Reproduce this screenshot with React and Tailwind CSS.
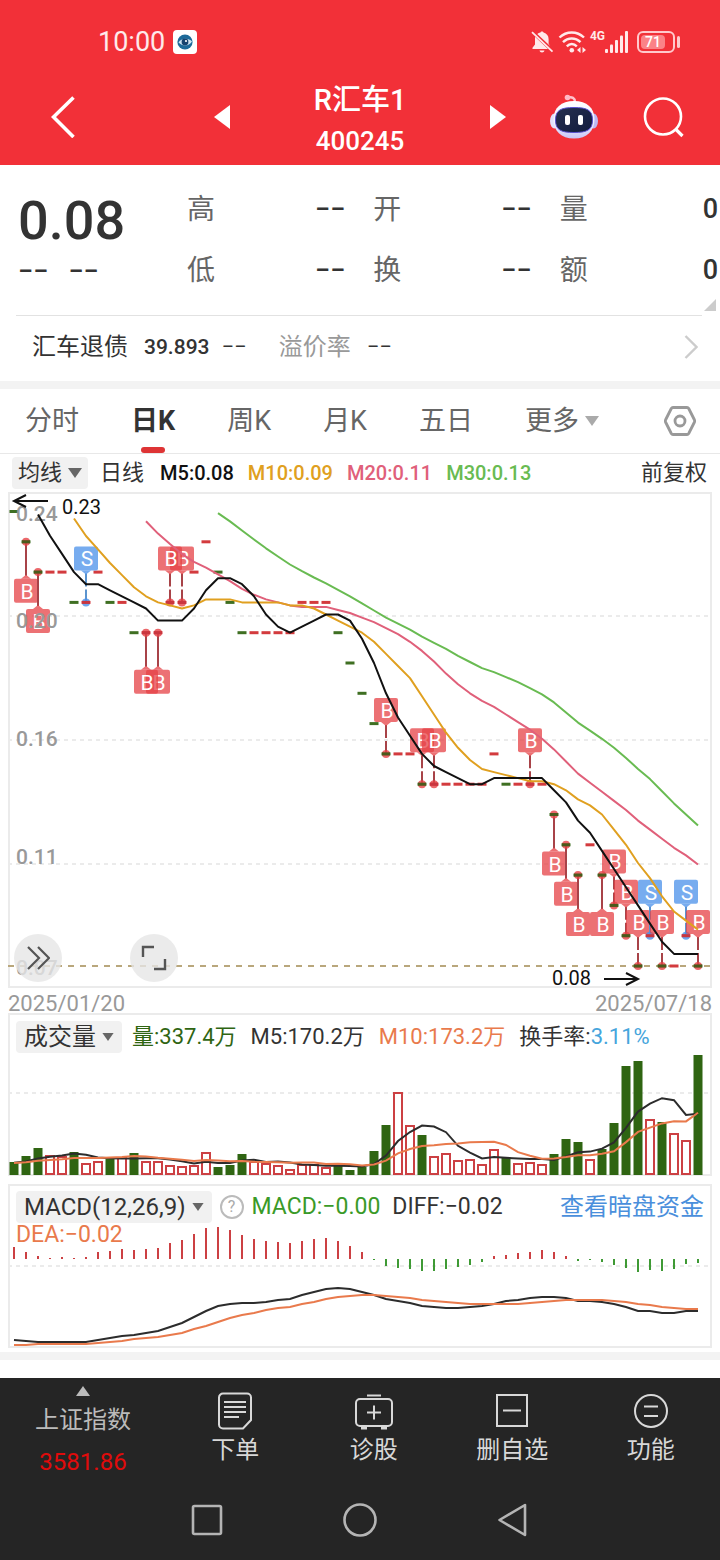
import React from 'react';

// Closing prices in cents, one per trading day
const CLOSES = [
  23, 22, 21, 21, 21, 20, 20, 21, 20, 20, 19, 19, 19, 20, 20, 21, 22, 21, 20, 19, 19, 19, 19, 19, 20,
  20, 20, 19, 18, 17, 16, 15, 15, 15, 14, 14, 14, 14, 14, 14, 15, 14, 14, 14, 14, 13, 12, 11, 12, 11,
  10, 9, 8, 9, 8, 8, 9, 8,
];
// Days before the visible range, needed by the moving averages
const CLOSES_BEFORE = [28.2, 28, 27.9, 27.7, 27.2, 26.9, 26.6, 26.2, 25.8, 25.4, 24.5, 24];

const FALLING_DAYS = [
  0, 1, 2, 5, 8, 10, 17, 18, 19, 27, 28, 29, 30, 31, 34, 41, 45, 46, 47, 49, 50, 51, 52, 54, 57,
];

const TRADES = [
  { day: 1, type: 'B', below: true },
  { day: 2, type: 'B', below: true },
  { day: 6, type: 'S' },
  { day: 12, type: 'B', below: true },
  { day: 11, type: 'B', below: true },
  { day: 14, type: 'B' },
  { day: 13, type: 'B' },
  { day: 31, type: 'B' },
  { day: 34, type: 'B' },
  { day: 35, type: 'B' },
  { day: 43, type: 'B' },
  { day: 45, type: 'B', below: true },
  { day: 46, type: 'B', below: true },
  { day: 47, type: 'B', below: true },
  { day: 49, type: 'B', below: true },
  { day: 50, type: 'B' },
  { day: 51, type: 'B' },
  { day: 52, type: 'B' },
  { day: 53, type: 'S' },
  { day: 54, type: 'B' },
  { day: 56, type: 'S' },
  { day: 57, type: 'B' },
];

const VOLUMES = [
  13, 19, 27, 20, 19, 23, 12, 14, 16, 18, 22, 14, 14, 10, 9, 10, 23, 8, 10, 21, 14, 12, 10, 6, 11, 11,
  8, 10, 5, 8, 24, 50, 83, 50, 40, 19, 22, 15, 16, 11, 26, 18, 12, 13, 11, 21, 36, 33, 16, 26, 52,
  109, 114, 56, 53, 42, 35, 120,
];
const VOLUMES_BEFORE = [12, 12, 12, 12, 12, 12, 12, 12, 12];

const MACD_BARS = [
  12, 7, 3, 1, 2, 1, 2, 7, 8, 10, 9, 10, 11, 16, 19, 25, 31, 32, 29, 24, 20, 18, 17, 16, 18, 20, 21,
  18, 13, 7, -1, -7, -9, -10, -12, -12, -10, -8, -6, -3, 3, 4, 6, 7, 9, 7, 3, -2, -1, -3, -6, -9, -13,
  -11, -12, -10, -5, -4,
];
const DIFF = [
  156, 157, 158, 158, 158, 158, 158, 156, 154, 152, 151, 149, 147, 143, 139, 133, 127, 122, 120, 119,
  119, 118, 116, 115, 111, 108, 105, 104, 105, 108, 111, 115, 117, 119, 122, 123, 124, 124, 123, 122,
  120, 117, 116, 114, 113, 113, 114, 117, 117, 118, 120, 123, 127, 127, 129, 129, 127, 127,
];
const DEA = [
  161, 161, 160, 160, 160, 160, 160, 159, 158, 157, 155, 154, 153, 151, 149, 145, 142, 138, 134, 131,
  129, 126, 124, 123, 120, 118, 115, 113, 112, 111, 111, 112, 113, 114, 116, 117, 118, 119, 120, 120,
  120, 120, 120, 119, 118, 117, 116, 116, 116, 116, 117, 118, 120, 121, 123, 124, 125, 125,
];

const dayX = (day) => 6 + day * 12;
const priceY = (cents) => 474 - (cents - 8) * 30.3;

// Polyline points of an n-day moving average, starting where enough days are known
const averagePoints = (before, values, n, toY) => {
  const all = [...before, ...values];
  const points = [];
  values.forEach((_, day) => {
    const end = before.length + day + 1;
    if (end < n) return;
    const sum = all.slice(end - n, end).reduce((a, b) => a + b, 0);
    points.push(`${dayX(day)},${toY(sum / n).toFixed(1)}`);
  });
  return points.join(' ');
};

const linePoints = (values) => values.map((v, day) => `${dayX(day)},${v}`).join(' ');

function Caret({ className }) {
  return (
    <svg viewBox="0 0 14 10" className={className} fill="currentColor" aria-hidden="true">
      <path d="M0 0h14L7 10z" />
    </svg>
  );
}

function StatusBar() {
  return (
    <div className="flex items-center justify-between pl-[98px] pr-10 pt-6 text-white">
      <div className="flex h-9 items-center gap-2">
        <span className="text-[27px] leading-9 text-white/90">10:00</span>
        <svg viewBox="0 0 24 24" className="h-6 w-6" aria-hidden="true">
          <rect width="24" height="24" rx="4" fill="#fff" />
          <circle cx="12" cy="12" r="7.6" fill="#1d6a99" />
          <path d="M5.500 12.500C8 8 15.500 7.500 19 11.500c-3 4.500-9 5.500-13.500 1z" fill="#cfe4f2" />
          <circle cx="12" cy="12" r="3.400" fill="#17446f" />
          <circle cx="13" cy="11" r="1.100" fill="#fff" />
        </svg>
      </div>
      <div className="flex h-9 items-center">
        {/* Muted bell */}
        <svg viewBox="0 0 24 24" className="h-6 w-6" fill="#ffe9ea" aria-hidden="true">
          <path d="M12 1.500c.8 0 1.400.4 1.600 1.100 3.200.8 5 3.300 5 6.700v4.500l1.500 2.300L7.300 3.900c.9-.6 2-1.100 3.100-1.300.2-.7.800-1.100 1.600-1.100z" />
          <path d="M5 6.700 18 19H2.500v-1.200L5 14.500z" />
          <path d="M9.500 20.500h5c-.3 1.300-1.200 2-2.500 2s-2.200-.7-2.500-2z" />
          <path d="M2 2.200l20.500 19.500" stroke="#ffe9ea" strokeWidth="1.800" />
        </svg>
        {/* Wifi */}
        <svg viewBox="0 0 30 24" className="ml-1 h-6 w-[30px]" fill="none" stroke="#ffe9ea" strokeWidth="2.400" aria-hidden="true">
          <path d="M1.500 7.500C8.500.800 19 .800 26 7.500" />
          <path d="M5 12.200c5-5 12.500-5 17.500 0" />
          <path d="M8.800 16.300c3-3 7-3 10 0" />
          <circle cx="13.800" cy="20.300" r="2.300" fill="#ffe9ea" stroke="none" />
          <path d="M19 20l3.500-3v6zM28 20l-3.500-3v6z" fill="#ffe9ea" stroke="none" />
        </svg>
        <span className="ml-0.5 self-start pt-1 text-xs font-bold leading-4 text-[#ffe9ea]">4G</span>
        <svg viewBox="0 0 24 24" className="h-6 w-6" fill="#ffe9ea" aria-hidden="true">
          <rect x="0" y="19" width="3" height="4" rx="1" />
          <rect x="5" y="14.500" width="3" height="8.500" rx="1" />
          <rect x="10" y="10" width="3" height="13" rx="1" />
          <rect x="15" y="5.500" width="3" height="17.500" rx="1" />
          <rect x="20" y="1" width="3" height="22" rx="1" />
        </svg>
        <div className="ml-2 flex h-[22px] w-[38px] items-center rounded-md border-2 border-[#ffc9cc] p-0.5">
          <span className="flex h-full w-6 items-center justify-center rounded-sm bg-[#fb8287] text-sm font-medium text-white">
            71
          </span>
        </div>
        <span className="ml-0.5 h-3 w-[3px] rounded-sm bg-[#ffc9cc]" />
      </div>
    </div>
  );
}

function RobotIcon() {
  return (
    <svg viewBox="0 0 48 46" className="h-[46px] w-12" aria-hidden="true">
      <defs>
        <linearGradient id="shell" x1="0" y1="0" x2="0" y2="1">
          <stop offset="0" stopColor="#ffffff" />
          <stop offset="0.600" stopColor="#eef0ff" />
          <stop offset="1" stopColor="#c9c4f7" />
        </linearGradient>
        <linearGradient id="visor" x1="0" y1="0" x2="1" y2="1">
          <stop offset="0" stopColor="#26304f" />
          <stop offset="1" stopColor="#111b3d" />
        </linearGradient>
      </defs>
      <path d="M18 3.500c4-1 7 .5 7 4.500" fill="none" stroke="#ffc3cd" strokeWidth="2.400" />
      <circle cx="17.500" cy="3.500" r="2.800" fill="#ffb9c6" />
      <ellipse cx="4.500" cy="27" rx="4.500" ry="7.500" fill="#dfe0fb" />
      <ellipse cx="43.500" cy="27" rx="4.500" ry="7.500" fill="#bdb9f3" />
      <path d="M24 7c13 0 20.500 7 20.500 18.500S37 44.500 24 44.500 3.500 37 3.500 25.500 11 7 24 7z" fill="url(#shell)" />
      <path
        d="M24 13.500c13 0 18.500 2.500 18.500 12.500S37 38.500 24 38.500 5.500 36 5.500 26 11 13.500 24 13.500z"
        fill="url(#visor)"
        stroke="#5a4fd0"
        strokeWidth="1"
      />
      <rect x="15" y="21" width="5" height="10" rx="2" fill="#fff" />
      <rect x="28" y="21" width="5" height="10" rx="2" fill="#fff" />
    </svg>
  );
}

function Header() {
  return (
    <header className="bg-[#f23038] pb-1 text-white">
      <StatusBar />
      <div className="mt-[13px] grid grid-cols-[1fr_auto_1fr] items-center pl-[51px] pr-[35px]">
        <button type="button" aria-label="返回" className="justify-self-start">
          <svg viewBox="0 0 24 42" className="h-[42px] w-6" fill="none" stroke="currentColor" strokeWidth="3.600" aria-hidden="true">
            <path d="M22.500 1.500 2.500 21l20 20" />
          </svg>
        </button>
        <div className="-ml-4 flex items-center gap-[77px]">
          <button type="button" aria-label="上一只">
            <svg viewBox="0 0 16 24" className="h-6 w-4" fill="currentColor" aria-hidden="true">
              <path d="M16 0v24L0 12z" />
            </svg>
          </button>
          <h1 className="flex w-[106px] flex-col items-center pt-1.5 font-medium">
            <span className="text-[29px] leading-[42px]">R汇车1</span>
            <span className="text-[26px] leading-10">400245</span>
          </h1>
          <button type="button" aria-label="下一只">
            <svg viewBox="0 0 16 24" className="h-6 w-4" fill="currentColor" aria-hidden="true">
              <path d="M0 0v24l16-12z" />
            </svg>
          </button>
        </div>
        <div className="flex items-center gap-[45px] justify-self-end">
          <button type="button" aria-label="智能助手">
            <RobotIcon />
          </button>
          <button type="button" aria-label="搜索">
            <svg viewBox="0 0 42 42" className="h-[42px] w-[42px]" fill="none" stroke="currentColor" strokeWidth="2.600" aria-hidden="true">
              <circle cx="20" cy="20.500" r="18" />
              <path d="M32.500 33l7 7" strokeWidth="3.200" />
            </svg>
          </button>
        </div>
      </div>
    </header>
  );
}

const QUOTE_FIELDS = [
  ['高', '−−'],
  ['开', '−−'],
  ['量', '0'],
  ['低', '−−'],
  ['换', '−−'],
  ['额', '0'],
];

function Quote() {
  return (
    <section className="bg-white">
      <div className="flex pt-[14px]">
        <div className="w-[187px] shrink-0 pl-[18px] text-[#333]">
          <div className="text-[54px] font-medium leading-[84px]">0.08</div>
          <div className="flex gap-5 text-[27px] font-medium leading-4">
            <span>−−</span>
            <span>−−</span>
          </div>
        </div>
        <dl className="grid flex-1 grid-cols-3 gap-x-7 pr-0.5">
          {QUOTE_FIELDS.map(([label, value]) => (
            <div key={label} className="flex h-[61px] items-center justify-between">
              <dt className="text-[28px] text-[#666]">{label}</dt>
              <dd className="text-[27px] font-medium text-[#333]">{value}</dd>
            </div>
          ))}
        </dl>
      </div>
      <div className="flex h-[10px] items-end justify-end pr-1 text-[#ccc]">
        <svg viewBox="0 0 12 12" className="h-3 w-3" fill="currentColor" aria-hidden="true">
          <path d="M12 0v12H0z" />
        </svg>
      </div>
      <a href="#bond" className="ml-4 mr-[18px] mt-1 flex h-[66px] items-center border-t border-[#e2e2e2] pb-1 pl-4 text-2xl text-[#333]">
        <span>汇车退债</span>
        <span className="ml-4 text-[21px] font-medium">39.893</span>
        <span className="ml-3 text-[22px]">−−</span>
        <span className="ml-8 text-[#999]">溢价率</span>
        <span className="ml-4 text-[22px]">−−</span>
        <svg viewBox="0 0 14 24" className="ml-auto mr-1 h-6 w-[14px]" fill="none" stroke="#ccc" strokeWidth="2.400" aria-hidden="true">
          <path d="M1.500 1l11 11-11 11" />
        </svg>
      </a>
    </section>
  );
}

const TABS = ['分时', '日K', '周K', '月K', '五日'];

function PeriodTabs() {
  return (
    <nav className="flex h-[65px] items-stretch gap-[52px] border-b border-[#e8e8e8] pl-[25px] pr-6 text-[27px] text-[#666]">
      {TABS.map((tab) =>
        tab === '日K' ? (
          <button key={tab} type="button" className="relative font-bold text-[#333]">
            {tab}
            <span className="absolute bottom-0 left-1/2 h-1.5 w-6 -translate-x-1/2 rounded-sm bg-[#de3435]" />
          </button>
        ) : (
          <button key={tab} type="button">
            {tab}
          </button>
        ),
      )}
      <button type="button" className="flex items-center gap-1.5">
        更多
        <Caret className="h-3 w-[14px] text-[#aaa]" />
      </button>
      <button type="button" aria-label="设置" className="ml-auto shrink-0">
        <svg viewBox="0 0 32 32" className="h-8 w-8" fill="none" stroke="#999" strokeWidth="2.800" strokeLinejoin="round" aria-hidden="true">
          <path d="M9 2.500h14a2 2 0 0 1 1.700 1L30.500 15a2 2 0 0 1 0 2l-5.800 11.500a2 2 0 0 1-1.700 1H9a2 2 0 0 1-1.700-1L1.500 17a2 2 0 0 1 0-2L7.300 3.500a2 2 0 0 1 1.700-1z" />
          <circle cx="16" cy="16" r="5" />
        </svg>
      </button>
    </nav>
  );
}

function TradeTag({ day, type, below }) {
  const x = dayX(day);
  const y = priceY(CLOSES[day]);
  const center = below ? y + 49 : y - 44;
  const fill = type === 'B' ? '#e64246' : '#4a90ea';
  const stem = type === 'B' ? '#a84348' : '#5b94cf';
  const side = below ? -1 : 1;
  return (
    <g>
      <line
        x1={x}
        x2={x}
        y1={y}
        y2={center + side * 15}
        stroke={stem}
        strokeWidth="2"
        strokeDasharray={below ? undefined : '13 3 20'}
      />
      <circle cx={x} cy={y} r="4" fill={fill} fillOpacity="0.800" />
      <path
        d={`M${x - 5} ${center + side * 12}h10l-5 ${side * 4}z`}
        fill={fill}
        fillOpacity="0.750"
      />
      <rect x={x - 12} y={center - 12} width="24" height="24" rx="2" fill={fill} fillOpacity="0.750" />
      <text x={x + 1} y={center + 8} fontSize="21" textAnchor="middle" fill="#fff">
        {type}
      </text>
    </g>
  );
}

function PriceChart() {
  return (
    <svg viewBox="0 0 704 496" className="block h-auto w-full overflow-visible" fill="none" role="img" aria-label="日K线">
      <rect x="1" y="1" width="702" height="494" stroke="#ebebeb" strokeWidth="2" />
      {[124, 248, 372].map((y) => (
        <line key={y} x1="0" x2="704" y1={y} y2={y} stroke="#ebebeb" strokeWidth="2" strokeDasharray="4 4" />
      ))}
      <line x1="0" x2="704" y1="474" y2="474" stroke="#b9a77c" strokeWidth="2" strokeDasharray="6 6" />

      {CLOSES.map((close, day) => (
        <rect
          key={day}
          x={dayX(day) - 4.5}
          y={priceY(close) - 1.5}
          width="9"
          height="3"
          fill={FALLING_DAYS.includes(day) ? '#3f6f22' : '#d33b3e'}
        />
      ))}
      {TRADES.map((trade) => (
        <TradeTag key={trade.day} {...trade} />
      ))}
      {TRADES.map(({ day }) => (
        <rect
          key={day}
          x={dayX(day) - 4}
          y={priceY(CLOSES[day]) - 1.5}
          width="8"
          height="3"
          fill={FALLING_DAYS.includes(day) ? '#4a5a1c' : '#c9363f'}
        />
      ))}

      <g fontSize="21" fontWeight="500" fill="#999">
        <text x="8" y="29">0.24</text>
        <text x="8" y="136">0.20</text>
        <text x="8" y="254">0.16</text>
        <text x="8" y="372">0.11</text>
        <text x="8" y="483">0.07</text>
      </g>

      <g strokeWidth="2" strokeLinejoin="round">
        <polyline points={averagePoints(CLOSES_BEFORE, CLOSES, 30, priceY)} stroke="#69bb52" />
        <polyline points={averagePoints(CLOSES_BEFORE.slice(4), CLOSES, 20, priceY)} stroke="#e0607a" />
        <polyline points={averagePoints(CLOSES_BEFORE.slice(8), CLOSES, 10, priceY)} stroke="#e0a020" />
        <polyline points={averagePoints(CLOSES_BEFORE.slice(10), CLOSES, 5, priceY)} stroke="#111" />
      </g>

      <g fontSize="20" fill="#111" stroke="none">
        <text x="54" y="22">0.23</text>
        <text x="544" y="493">0.08</text>
      </g>
      <g stroke="#111" strokeWidth="2">
        <path d="M40 9H6M18 3L6 9l12 6" />
        <path d="M596 487h34M618 481l12 6-12 6" />
      </g>
    </svg>
  );
}

function PriceSection() {
  return (
    <section>
      <div className="flex h-[38px] items-center pl-3 pr-[13px] text-xl font-medium">
        <button type="button" className="flex h-8 items-center gap-1.5 rounded bg-[#f1f1f1] px-1.5 text-[22px] font-normal text-[#333]">
          均线
          <Caret className="h-2.5 w-[14px] text-[#666]" />
        </button>
        <span className="ml-3 text-[22px] font-normal text-[#333]">日线</span>
        <div className="flex gap-[14px] pl-4">
          <span className="text-[#111]">M5:0.08</span>
          <span className="text-[#e0a020]">M10:0.09</span>
          <span className="text-[#e0607a]">M20:0.11</span>
          <span className="text-[#69bb52]">M30:0.13</span>
        </div>
        <button type="button" className="ml-auto text-[22px] font-normal text-[#333]">
          前复权
        </button>
      </div>
      <div className="relative mx-2">
        <PriceChart />
        <div className="absolute bottom-1.5 left-1.5 flex gap-[68px] text-[#555]">
          <button type="button" aria-label="展开" className="flex h-12 w-12 items-center justify-center rounded-full bg-[#e6e6e6]/80">
            <svg viewBox="0 0 24 24" className="h-6 w-6" fill="none" stroke="currentColor" strokeWidth="2.200" aria-hidden="true">
              <path d="M2 1l11 11L2 23M12 1l11 11-11 11" />
            </svg>
          </button>
          <button type="button" aria-label="全屏" className="flex h-12 w-12 items-center justify-center rounded-full bg-[#e6e6e6]/80">
            <svg viewBox="0 0 26 26" className="h-[26px] w-[26px]" fill="none" stroke="currentColor" strokeWidth="2.400" aria-hidden="true">
              <path d="M2 12V2h11M24 14v10H13" />
            </svg>
          </button>
        </div>
      </div>
      <div className="mx-2 flex h-[25px] items-end justify-between text-[22px] leading-[18px] text-[#999]">
        <time dateTime="2025-01-20">2025/01/20</time>
        <time dateTime="2025-07-18">2025/07/18</time>
      </div>
    </section>
  );
}

const volumeY = (v) => 162 - v;

function VolumeSection() {
  return (
    <section className="relative mx-2">
      <svg viewBox="0 0 704 163" className="block h-auto w-full" fill="none" role="img" aria-label="成交量">
        <rect x="1" y="1" width="702" height="161" stroke="#ebebeb" strokeWidth="2" />
        <line x1="0" x2="704" y1="80" y2="80" stroke="#ebebeb" strokeWidth="2" strokeDasharray="4 4" />
        {VOLUMES.map((v, day) =>
          FALLING_DAYS.includes(day) ? (
            <rect key={day} x={dayX(day) - 4.5} y={volumeY(v)} width="9" height={v} fill="#2f6512" />
          ) : (
            <rect
              key={day}
              x={dayX(day) - 4}
              y={volumeY(v) + 1}
              width="8"
              height={v - 2}
              fill="#fff"
              stroke="#cc4043"
              strokeWidth="2"
            />
          ),
        )}
        <polyline points={averagePoints(VOLUMES_BEFORE, VOLUMES, 5, volumeY)} stroke="#2c2c2c" strokeWidth="2" />
        <polyline points={averagePoints(VOLUMES_BEFORE, VOLUMES, 10, volumeY)} stroke="#e97a4c" strokeWidth="2" />
      </svg>
      <div className="absolute inset-x-0 top-[7px] flex items-center gap-[14px] pl-2 text-[22px] text-[#333]">
        <button type="button" className="-mr-1 flex h-8 items-center gap-1.5 rounded bg-[#f1f1f1] px-2 text-2xl">
          成交量
          <Caret className="h-2 w-3 text-[#666]" />
        </button>
        <span className="text-[#2f6512]">量:337.4万</span>
        <span>M5:170.2万</span>
        <span className="text-[#e97a4c]">M10:173.2万</span>
        <span>
          换手率:<span className="text-[#45a5dc]">3.11%</span>
        </span>
      </div>
    </section>
  );
}

function MacdSection() {
  return (
    <section className="relative mx-2 mt-2">
      <svg viewBox="0 0 704 164" className="block h-auto w-full" fill="none" role="img" aria-label="MACD">
        <rect x="1" y="1" width="702" height="162" stroke="#ebebeb" strokeWidth="2" />
        <line x1="0" x2="704" y1="82" y2="82" stroke="#ebebeb" strokeWidth="2" strokeDasharray="4 4" />
        {MACD_BARS.map((v, day) => (
          <line
            key={day}
            x1={dayX(day)}
            x2={dayX(day)}
            y1="75"
            y2={75 - v}
            stroke={v > 0 ? '#cc4043' : '#3f9a35'}
            strokeWidth="2"
          />
        ))}
        <polyline points={linePoints(DIFF)} stroke="#2c2c2c" strokeWidth="2" />
        <polyline points={linePoints(DEA)} stroke="#e97a4c" strokeWidth="2" />
      </svg>
      <div className="absolute inset-x-0 top-[7px] pl-2 pr-2 text-[23px] text-[#333]">
        <div className="flex h-8 items-center">
          <button type="button" className="flex h-8 items-center gap-1.5 rounded bg-[#f1f1f1] px-2 text-2xl">
            MACD(12,26,9)
            <Caret className="h-2 w-3 text-[#666]" />
          </button>
          <button type="button" aria-label="指标说明" className="ml-2 h-6 w-6 rounded-full border-2 border-[#bbb] text-base leading-5 text-[#aaa]">
            ?
          </button>
          <span className="ml-2 text-[#3a9a28]">MACD:−0.00</span>
          <span className="ml-3">DIFF:−0.02</span>
          <a href="#funds" className="ml-auto text-2xl text-[#4a8fdc]">
            查看暗盘资金
          </a>
        </div>
        <div className="leading-6 text-[#e97a4c]">DEA:−0.02</div>
      </div>
    </section>
  );
}

function OrderIcon() {
  return (
    <svg viewBox="0 0 34 38" className="h-[38px] w-[34px]" fill="none" stroke="currentColor" strokeWidth="2" aria-hidden="true">
      <path d="M5 1.500h24a4 4 0 0 1 4 4V28l-8 8.500H5a4 4 0 0 1-4-4v-27a4 4 0 0 1 4-4z" />
      <path d="M6 10h22M6 15h22M6 20h22M6 25h15" />
    </svg>
  );
}

function DiagnoseIcon() {
  return (
    <svg viewBox="0 0 38 38" className="h-[38px] w-[38px]" fill="none" stroke="currentColor" strokeWidth="2" aria-hidden="true">
      <rect x="1" y="7" width="36" height="27" rx="4" />
      <path d="M12 3.500h14M19 13.500v14M12 20.500h14" />
      <path d="M6 36h6M26 36h6" strokeWidth="3" />
    </svg>
  );
}

function RemoveIcon() {
  return (
    <svg viewBox="0 0 34 38" className="h-[38px] w-[34px]" fill="none" stroke="currentColor" strokeWidth="2" aria-hidden="true">
      <rect x="2" y="3" width="30" height="31" />
      <path d="M8 18.500h18" />
    </svg>
  );
}

function FeaturesIcon() {
  return (
    <svg viewBox="0 0 34 38" className="h-[38px] w-[34px]" fill="none" stroke="currentColor" strokeWidth="2" aria-hidden="true">
      <circle cx="17" cy="19" r="16" />
      <path d="M10 14.500h14M10 24h14" />
    </svg>
  );
}

const ACTIONS = [
  { label: '下单', Icon: OrderIcon },
  { label: '诊股', Icon: DiagnoseIcon },
  { label: '删自选', Icon: RemoveIcon },
  { label: '功能', Icon: FeaturesIcon },
];

function Footer() {
  return (
    <footer className="mt-[18px] bg-[#252525] text-[#d8d8d8]">
      <div className="grid grid-cols-[166px_repeat(4,1fr)] pt-2">
        <button type="button" className="flex flex-col items-center text-2xl text-[#bbb]">
          <Caret className="h-2.5 w-4 rotate-180" />
          <span className="mt-1.5 leading-9">上证指数</span>
          <span className="mt-1 leading-10 text-[#e00b0b]">3581.86</span>
        </button>
        {ACTIONS.map(({ label, Icon }) => (
          <button key={label} type="button" className="flex flex-col items-center pt-1.5 text-2xl">
            <Icon />
            <span className="mt-0.5 leading-9">{label}</span>
          </button>
        ))}
      </div>
      <div className="flex justify-center gap-[117px] pb-[22px] pt-5 text-[#b4b4b4]">
        <button type="button" aria-label="最近任务">
          <svg viewBox="0 0 36 36" className="h-9 w-9" fill="none" stroke="currentColor" strokeWidth="2.600" aria-hidden="true">
            <rect x="4" y="4" width="28" height="28" rx="1.500" />
          </svg>
        </button>
        <button type="button" aria-label="主屏幕">
          <svg viewBox="0 0 36 36" className="h-9 w-9" fill="none" stroke="currentColor" strokeWidth="2.600" aria-hidden="true">
            <circle cx="18" cy="18" r="15.500" />
          </svg>
        </button>
        <button type="button" aria-label="后退">
          <svg viewBox="0 0 36 36" className="h-9 w-9" fill="none" stroke="currentColor" strokeWidth="2.600" strokeLinejoin="round" aria-hidden="true">
            <path d="M30 3v30L4.500 18z" />
          </svg>
        </button>
      </div>
    </footer>
  );
}

export default function App() {
  return (
    <div className="min-h-screen overflow-hidden whitespace-nowrap bg-white font-['Roboto','Noto_Sans_CJK_SC',sans-serif]">
      <Header />
      <main>
        <Quote />
        <div className="h-2 bg-[#f3f3f3]" />
        <PeriodTabs />
        <PriceSection />
        <VolumeSection />
        <MacdSection />
        <div className="mt-1 h-2 bg-[#f3f3f3]" />
      </main>
      <Footer />
    </div>
  );
}
